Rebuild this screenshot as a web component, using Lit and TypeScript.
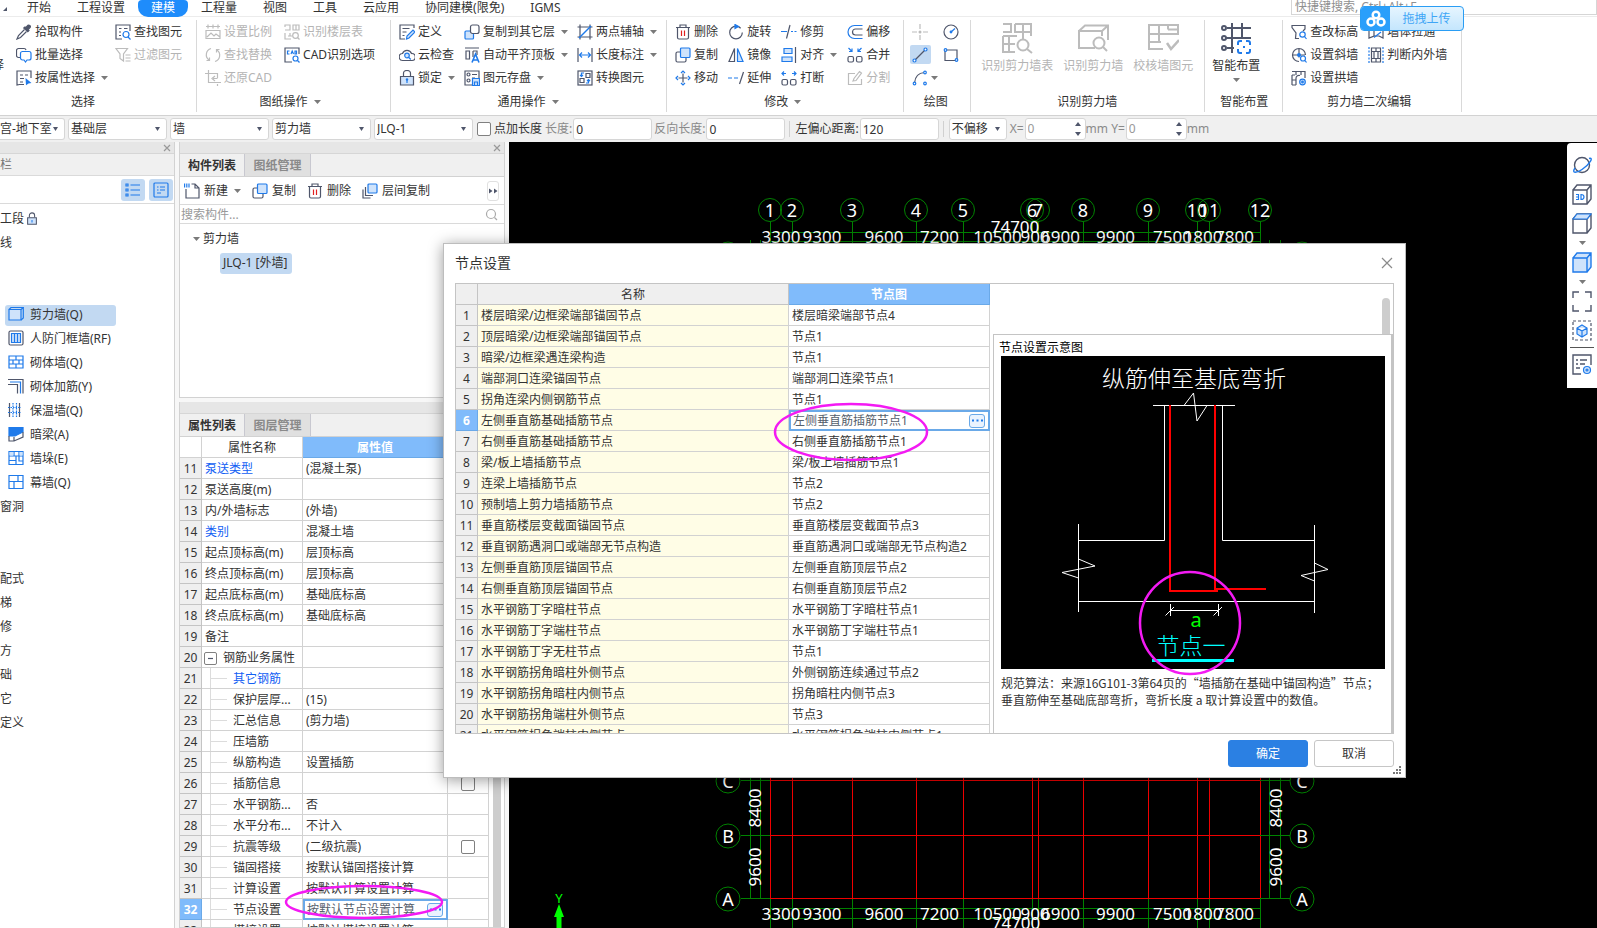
import { LitElement, html, svg, css, nothing } from "lit";
import { customElement } from "lit/decorators.js";
import { classMap } from "lit/directives/class-map.js";

const base = css`
  * { box-sizing: border-box; }
  button, input, select {
    font: inherit; color: inherit; margin: 0; padding: 0;
    border: 0; background: none; border-radius: 0; outline: none;
  }
  button { cursor: pointer; white-space: nowrap; }
  a { color: inherit; text-decoration: none; }
  svg { display: block; flex: none; fill: none; stroke-width: 1.2; }
  .ic { width: 16px; height: 16px; }
  .big { width: 32px; height: 32px; }
  .d { stroke: #4f566b; }
  .b { stroke: #1f7aea; }
  .g { stroke: #bcbcbc; }
  .r { stroke: #e02020; }
  .w { stroke: #fff; }
  .fl { fill: #cfe3fb; }
  .fb { fill: #1f7aea; }
  .fd { fill: #4f566b; }
  .fg { fill: #bcbcbc; }
  .fw { fill: #fff; }
  .ar { width: 7px; height: 4px; fill: #7a7a7a; }
`;

const arrow = html`<svg class="ar" viewBox="0 0 7 4"><path d="M0 0H7L3.5 4Z" /></svg>`;

const shapes: Record<string, unknown> = {
  pick: svg`<path class="d fd" d="M10 3.5l2-2.2c1-.9 3 .8 2.200 2l-2 2.200 .8 1-1.200 1.200L7.800 4l1.200-1z"/><path class="d" d="M8.500 5.500L2.500 11.500 1 15l3.500-1.500L10.500 7.500"/>`,
  batch: svg`<path class="d" d="M4 10.500H2.500a2 2 0 0 1-2-2V3.500a2 2 0 0 1 2-2H8a2 2 0 0 1 2 1.500"/><path class="b fw" d="M6 4.500h7a2 2 0 0 1 2 2V11a2 2 0 0 1-2 2h-2l-1.500 2L8 13H6.500a2 2 0 0 1-2-2V6.500a2 2 0 0 1 2-2z"/>`,
  attr: svg`<path class="d" d="M8 14.500H3.500L1 15V1H15V8M4 5h3M9 5h3M4 8.500h4M4 12h3"/><path class="fb" d="M9.500 8l6 5-3 .5-2.500 1.800z"/>`,
  find: svg`<path class="d" d="M7 15H1V1H15V7M4 4.500h2.500M4 8h2M4 11.500h2M9 4.500h3.500"/><circle class="b" cx="11" cy="10.500" r="3"/><path class="b" d="M13 13l2.500 2.500"/>`,
  filter: svg`<path class="g" d="M1 1.500H12.500L8.500 7V14L5 11.500V7ZM10.500 8h5M10.500 11h5M10.500 14h5"/>`,
  scale: svg`<path class="g" d="M1 2.500h14M3 .500v4M8 .500v4M13 .500v4M1 6.500h14v8H1zM2 13l4-4 3 3 2-2 4 3"/>`,
  floors: svg`<path class="g" d="M1 3V1h5v5H1M9 1h6v5H9zM12 1v5M1 9v6h6M4 12h4M6 9v3"/><circle class="g" cx="11.500" cy="11.500" r="2.800"/><path class="g" d="M13.500 13.500l2 2"/>`,
  replace: svg`<path class="g" d="M6 1.500A6.500 6.500 0 0 0 4 13M1.500 13.500h3V10.500M10 14.500A6.500 6.500 0 0 0 12 3M14.500 2.500h-3V5.500"/>`,
  cad: svg`<path class="d" d="M8 15H1V1H15V7"/><path class="b" d="M5.500 4H3.500v3h2M7 7l1.200-3L9.500 7M11 4v3h1.500V4z"/><circle class="b" cx="11.500" cy="11.500" r="2.500"/><path class="b" d="M13.500 13.500l2 2"/>`,
  restore: svg`<path class="g" d="M3.500 0V12.500H16M0 3.500H12.500V8M12.500 14V16M10 6l-3 2.500 3 2.500M12.500 8.500H8"/>`,
  define: svg`<path class="d" d="M6 15H1V1H15V4M3.500 4.500h7M3.500 8h4M3.500 11.500h2"/><path class="b fl" d="M7.500 15l.5-3L14 6l2 2-6 6z"/>`,
  cloud: svg`<path class="d" d="M4 13.500a3.500 3.500 0 0 1-.5-7A4.800 4.800 0 0 1 12.500 6.500a3.500 3.500 0 0 1 .5 7z"/><circle class="b fl" cx="8" cy="8.500" r="2.300"/><path class="b" d="M9.800 10.500l2 2"/>`,
  lock: svg`<path class="d fl" d="M1.500 6.500H14.500V15H1.500z"/><path class="d" d="M4.500 6V3.500a3.500 3 0 0 1 7 0V6"/><path class="b" d="M8 9.500V13"/><circle class="fb" cx="8" cy="9.500" r="1.200"/>`,
  copyto: svg`<rect class="b fl" x="1" y="7" width="8.500" height="8" rx="1"/><rect class="d fw" x="6.500" y="1" width="8.500" height="8.500" rx="2"/>`,
  align: svg`<path class="d" d="M1 1h14M2 4h3.500v8H2zM9 4h4v4M9 4v6"/><path class="b" stroke-width="1.600" d="M8 15.500L11.500 7l3.500 8.500M9 13h5"/>`,
  save: svg`<path class="d" d="M8 15H1V1H15V8M8 4.500h5M8 8h3"/><circle class="d" cx="4.500" cy="4.500" r="1.500"/><circle class="d" cx="4.500" cy="10.500" r="1.500"/><path class="b fl" d="M8.500 8.500H15.500V15.500H8.500zM10.500 15v-3h3v3"/>`,
  axis: svg`<path class="d" d="M3 .500V15.500M13 .500V15.500M.500 3H15.500M.500 13H15.500"/><path class="b" stroke-width="1.500" d="M2 14L14 2"/>`,
  dim: svg`<path class="d" d="M1 1V15M15 1V15"/><path class="b" d="M2.500 8H13.500M5 5.500L2.500 8 5 10.500M11 5.500L13.500 8 11 10.500"/>`,
  convert: svg`<rect class="d" x="1" y="1" width="14" height="14"/><path class="d" d="M9 3.500h4v4H9zM3 8.500h4v4H3z"/><path class="b" d="M7 3H4.500v3M3 5l1.500 1.500L6 5M9 13h2.500v-3M10 11l1.500-1.500L13 11"/>`,
  trash: svg`<path class="d" d="M1 3.500H15M5 3V1H11V3M2.500 4V13.500A1.500 1.500 0 0 0 4 15H12A1.500 1.500 0 0 0 13.500 13.500V4"/><path class="r" d="M6.500 6.500V12M9.500 6.500V12"/>`,
  copy: svg`<path class="d" d="M5 5H2.500A1.500 1.500 0 0 0 1 6.500V13.500A1.500 1.500 0 0 0 2.500 15H9.500A1.500 1.500 0 0 0 11 13.500V11"/><rect class="b fl" x="5.500" y="1" width="9.500" height="9.500" rx="1"/>`,
  move: svg`<path class="d" d="M8 3.500V12.500M3.500 8H12.500"/><path class="b" d="M6 3L8 1l2 2M6 13l2 2 2-2M3 6L1 8l2 2M13 6l2 2-2 2"/>`,
  rotate: svg`<circle class="d" cx="8" cy="8.500" r="6.300" stroke-dasharray="34 5"/><path class="b fb" d="M7 .500L10.500 2.500 7 4.500z"/>`,
  mirror: svg`<path class="d" d="M6.500 1.500V14.500H1z"/><path class="b fl" d="M9.500 1.500V14.500H15z"/>`,
  extend: svg`<path class="b" d="M0 8h4M6 8h4"/><path class="d" d="M15.500 2L11.500 14"/>`,
  trim: svg`<path class="b" d="M0 7.500H6M10 7.500h2M13.500 7.500h2"/><path class="d" d="M9 1L5.500 14.500"/>`,
  alignto: svg`<path class="b fl" d="M3 1.500H11V6.500H3zM1 10H11V14.500H1z"/><path class="d" d="M14.500 0V16"/>`,
  breakup: svg`<rect class="d" x="1" y="9.500" width="5.500" height="5.500" rx="1.500"/><rect class="d" x="9.500" y="9.500" width="5.500" height="5.500" rx="1.500"/><path class="b" d="M5 3.500H1.500M3 1.500l-2 2 2 2M11 3.500h3.500M13 1.500l2 2-2 2"/>`,
  offset: svg`<path class="b" d="M15.500 1.500H7.500a6.500 6.500 0 0 0 0 13H15.500"/><path class="d" d="M15.500 5H8.500a3 3 0 0 0 0 6H15.500"/>`,
  merge: svg`<rect class="d" x="1" y="9.500" width="5.500" height="5.500" rx="1.500"/><rect class="d" x="9.500" y="9.500" width="5.500" height="5.500" rx="1.500"/><path class="b" d="M1.500 1L5 4.500M5 1.500v3H2M14.500 1L11 4.500M11 1.500v3H14"/>`,
  split: svg`<path class="g" d="M8 3.500H1.500V14.500H14.500V9M6 11l3-.5L14.500 3 12.500 1.500 7 8.500z"/>`,
  point: svg`<path class="g" d="M8 0v5M8 11v5M0 8h5M11 8h5"/><circle class="fg" cx="8" cy="8" r="1.500"/>`,
  circle: svg`<circle class="d" cx="8" cy="8" r="7"/><path class="b" d="M8 8L12 4.500"/><circle class="fb" cx="8" cy="8" r="1.400"/>`,
  line: svg`<path class="d" d="M3 13L13 3"/><circle class="b fw" cx="2.500" cy="13.500" r="1.500"/><circle class="b fw" cx="13.500" cy="2.500" r="1.500"/>`,
  rect: svg`<path class="d" d="M2 3H14V13.500H2z"/><circle class="b fw" cx="2.500" cy="3" r="1.300"/><circle class="b fw" cx="13.500" cy="13" r="1.300"/>`,
  arc: svg`<path class="d" d="M2.500 13C3 7 6 3 12.500 2.500"/><circle class="b fw" cx="2.500" cy="13.500" r="1.300"/><circle class="b fw" cx="13" cy="2.500" r="1.300"/><circle class="b fw" cx="13" cy="13.500" r="1.300"/>`,
  level: svg`<path class="d" d="M8 14.500H4.500L5 9 1 3.500V1.500H14V5l-2 2"/><circle class="b" cx="11.500" cy="10.500" r="2.700"/><path class="b" d="M13.500 12.500l2 2.500"/>`,
  slope: svg`<path class="d" d="M8 14.500a6.500 6.500 0 1 1 6.500-6.500M8 1.500v9M1.500 8H14"/><circle class="fb" cx="8" cy="8" r="2"/><circle class="b" cx="12" cy="11.500" r="2.500"/><path class="b" d="M14 13.500l1.500 2"/>`,
  arch: svg`<path class="d" d="M1 15V5M1 1.500H14V8M1 5H4M1 10H5M5 15V8a3 3 0 0 1 4-2.500M5 2v3M10 2v3M5 15H1"/><circle class="b fl" cx="11.500" cy="12" r="2.800"/><circle class="b" cx="11.500" cy="12" r=".8"/>`,
  through: svg`<path class="d" d="M1 4L6 2V12L1 14zM6 12h5l4 2V4L11 2"/><path class="b" d="M6 13.500L13 8"/>`,
  inout: svg`<path class="b" stroke-dasharray="2 1.500" d="M1 0V16M15 0V16"/><path class="d" d="M3.500 1H12.500V15H3.500zM6 4.500h4v7H6zM3.500 4.500h9M3.500 11.500h9M8 1v3.500M8 11.500V15"/>`,
  newdoc: svg`<path class="b" stroke-width="2" stroke-dasharray="1.200 1" d="M0 1.500H6M0 3.500H6"/><path class="d" d="M2 6V15H15V5L11 1H7.500M11 1V5H15"/>`,
  layercopy: svg`<path class="d" d="M1 6.500V15H8.500M3.500 4V12.500H11"/><rect class="b fl" x="6" y="1" width="9" height="9" rx="1"/>`,
  list: svg`<path class="b" d="M5.500 3H15M5.500 8H15M5.500 13H15"/><path class="b" d="M1 2h2v2H1zM1 7h2v2H1zM1 12h2v2H1z"/>`,
  detail: svg`<rect class="b" x="1" y="1" width="14" height="14" rx="1"/><path class="b" d="M4 5h1.500M7 5h5M4 8h1.500M7 8h5M4 11h4"/>`,
  wall: svg`<path class="b fl" d="M1 3.500H13V14H1z"/><path class="b" d="M1 3.500L3 1.500H15.300L13 3.500M13 14L15.300 12V1.500"/>`,
  rf: svg`<rect class="d" x="1" y="1" width="14" height="14" rx="1.500"/><path class="b fl" d="M3.500 3.500H12.500V12.500H3.500zM6.500 3.500v9M9.500 3.500v9"/>`,
  brick: svg`<path class="b" d="M1 2H15V14H1zM1 6H15M1 10H15M8 2v4M5 6v4M11 6v4M8 10v4"/>`,
  rebar: svg`<path class="d" d="M0 1.500H15V15.500M0 6.500H9.500V15.500"/><path class="b" d="M2 4h10.500V15.500"/>`,
  insul: svg`<path class="d" d="M1.500 1V15M11.500 1V15"/><path class="b" stroke-dasharray="1.500 1" d="M5 1V15M8.500 1V15M0 5.500H13M0 10.500H13"/>`,
  beam: svg`<path class="b fb" d="M1 1.500H15V6L7 10H1z"/><path class="d" d="M1 10V15H6L15 11V6M6 15v-4"/>`,
  pier: svg`<path class="b" d="M1 1.500H15V14.500H1zM1 6H15M6 1.500V6M11 1.500V6M8 6V14.500M1 10.500H8M11 6v5h4"/><path class="fl" d="M1.600 2.100H5.400V5.400H1.600zM11.600 2.100h3v3.300h-3z"/>`,
  curtain: svg`<path class="b" d="M1 1.500H15V14.500H1zM1 7.500H15M10 1.500V7.500M6 7.500V14.500"/>`,
  locks: svg`<path class="d fl" d="M3 6.500H13V14H3z"/><path class="d" d="M5 6V4a3 3 0 0 1 6 0V6"/><path class="b" d="M8 9v3"/>`,
  mag: svg`<circle cx="7" cy="7" r="4.500" stroke="#aaa"/><path stroke="#aaa" d="M10.500 10.500L13 13"/>`,
  more: svg`<path class="fd" d="M4 5.500L7.500 8 4 10.500zM9 5.500L12.500 8 9 10.500z"/>`,
};
const ic = (name: string) => html`<svg class="ic" viewBox="0 0 16 16" aria-hidden="true">${shapes[name]}</svg>`;

const bigs: Record<string, unknown> = {
  table: svg`<path class="g" stroke-width="2" d="M2 2H10V10H2M14 2H30V14M14 2V10H30M22 2V18M2 14V30H14M2 22H14M8 14V30M2 14H16"/><circle class="g" stroke-width="2" cx="22" cy="23" r="5.500"/><path class="g" stroke-width="2" d="M26 27l5 4"/>`,
  box: svg`<path class="g" stroke-width="2" d="M18 26H2V9H25V14M2 9L8 3.500H31V18M25 9L31 3.500"/><circle class="g" stroke-width="2" cx="22" cy="21" r="5.500"/><path class="g" stroke-width="2" d="M26 25l4 4"/>`,
  check: svg`<path class="g" stroke-width="2" d="M16 27H2V3H31V12H2M12 3V12M21 7.500H31M2 20H14M12 12V20M21 3V7.500"/><path class="g" stroke-width="2.500" d="M20 21l4 6 8-9"/>`,
  smart: svg`<path class="d" stroke-width="2" d="M7 6H31M7 16H17M7 26H14M12 1V31M22 1V16M6 16H31"/><circle class="d fw" stroke-width="2" cx="4" cy="6" r="2"/><circle class="d fw" stroke-width="2" cx="4" cy="16" r="2"/><circle class="d fw" stroke-width="2" cx="4" cy="26" r="2"/><path class="fw" d="M16 18H32V32H16z"/><path class="b" stroke-width="2" d="M18 23V21a2 2 0 0 1 2-2H22M26 19H28a2 2 0 0 1 2 2V23M30 27V29a2 2 0 0 1-2 2H26M22 31H20a2 2 0 0 1-2-2V27M23 25H25"/>`,
};
const big = (name: string) => html`<svg class="big" viewBox="0 0 32 32" aria-hidden="true">${bigs[name]}</svg>`;

/* Axis grid drawn on the drawing area, in window coordinates. */
const AXES = [770, 792, 852, 916, 963, 1032, 1038, 1083, 1148, 1197, 1209, 1260];
const SPANS = ["3300", "9300", "9600", "7200", "10500", "900", "6900", "9900", "7500", "1800", "7800"];
const ROWS: [string, number][] = [["D", 253], ["C", 780], ["B", 835], ["A", 898]];

@customElement("plan-canvas")
class PlanCanvas extends LitElement {
  static styles = [base, css`
    :host { display: block; background: #000; overflow: hidden; }
    svg { width: 100%; height: 100%; }
    text { fill: #fff; font: 17px "Noto Sans", sans-serif; text-anchor: middle; }
    .n { font-size: 18px; }
    .y { fill: #0f0; font-size: 13px; }
    .grn { stroke: #008200; stroke-width: 1; }
    .red { stroke: #f00000; stroke-width: 1; }
  `];
  render() {
    return html`<svg aria-label="轴网"><g transform="translate(-509 -142)">
      ${AXES.map((x, i) => svg`
        <path class="grn" d="M${x + 0.5} 222V780M${x + 0.5} 898V928" />
        <path class="red" d="M${x + 0.5} 700V898" />
        <circle class="grn" cx=${x} cy="210" r="11.500" />
        <text class="n" x=${x} y="217">${i + 1}</text>`)}
      <path class="grn" d="M770 232.500H1260M770 241.500H1260M770 908.500H1260M770 918.500H1260M750.500 240V898M760.500 240V898M1269.500 240V898M1280.500 240V898" />
      ${ROWS.map(([name, y]) => svg`
        <path class="grn" d="M741 ${y + 0.5}H770M1260 ${y + 0.5}H1290" />
        <path class="red" d="M770 ${y + 0.5}H1260" />
        ${[728, 1302].map((x) => svg`<circle class="grn" cx=${x} cy=${y + 1} r="12" />
          <text class="n" x=${x} y=${y + 8}>${name}</text>`)}`)}
      ${SPANS.map((s, i) => [243, 920].map((y) => svg`
        <text x=${(AXES[i] + AXES[i + 1]) / 2} y=${y}>${s}</text>`))}
      <text x="1015" y="233">74700</text>
      <text x="1016" y="929">74700</text>
      ${[755, 1276].map((x) => [["8400", 808], ["9600", 867]].map(([s, y]) => svg`
        <text transform="translate(${x + 6} ${y}) rotate(-90)">${s}</text>`))}
      <text class="y" x="559" y="903">Y</text>
      <path fill="#0f0" d="M559 904L564 917H561.500V928H556.500V917H554Z" />
    </g></svg>`;
  }
}

const NODES: [string, string][] = [
  ["楼层暗梁/边框梁端部锚固节点", "楼层暗梁端部节点4"],
  ["顶层暗梁/边框梁端部锚固节点", "节点1"],
  ["暗梁/边框梁遇连梁构造", "节点1"],
  ["端部洞口连梁锚固节点", "端部洞口连梁节点1"],
  ["拐角连梁内侧钢筋节点", "节点1"],
  ["左侧垂直筋基础插筋节点", "左侧垂直筋插筋节点1"],
  ["右侧垂直筋基础插筋节点", "右侧垂直筋插筋节点1"],
  ["梁/板上墙插筋节点", "梁/板上墙插筋节点1"],
  ["连梁上墙插筋节点", "节点2"],
  ["预制墙上剪力墙插筋节点", "节点2"],
  ["垂直筋楼层变截面锚固节点", "垂直筋楼层变截面节点3"],
  ["垂直钢筋遇洞口或端部无节点构造", "垂直筋遇洞口或端部无节点构造2"],
  ["左侧垂直筋顶层锚固节点", "左侧垂直筋顶层节点2"],
  ["右侧垂直筋顶层锚固节点", "右侧垂直筋顶层节点2"],
  ["水平钢筋丁字暗柱节点", "水平钢筋丁字暗柱节点1"],
  ["水平钢筋丁字端柱节点", "水平钢筋丁字端柱节点1"],
  ["水平钢筋丁字无柱节点", "节点1"],
  ["水平钢筋拐角暗柱外侧节点", "外侧钢筋连续通过节点2"],
  ["水平钢筋拐角暗柱内侧节点", "拐角暗柱内侧节点3"],
  ["水平钢筋拐角端柱外侧节点", "节点3"],
  ["水平钢筋拐角端柱内侧节点", "水平钢筋拐角端柱内侧节点1"],
];

const editor = (value: string, label: string) => html`<div class="edit">
  <input .value=${value} aria-label=${label} />
  <button class="dots" aria-label="选择节点"><svg width="11" height="3" viewBox="0 0 11 3"><path class="fb" d="M0 .500h2v2H0zM4.500 .500h2v2h-2zM9 .500h2v2H9z" /></svg></button>
</div>`;

const tableStyles = css`
  table { border-collapse: separate; border-spacing: 0; table-layout: fixed; }
  th, td {
    height: 21px; padding: 2px 0 0 3px; text-align: left; font-weight: 400; line-height: 18px;
    border-right: 1px solid #d2d2d2; border-bottom: 1px solid #d2d2d2;
    white-space: nowrap; overflow: hidden;
  }
  thead th { text-align: center; padding: 2px 0 0; }
  tbody th { background: #efefef; text-align: center; padding: 2px 0 0; border-color: #c4c4c4; }
  thead th.hot, tbody th.hot { background: #80bbfb; color: #fff; font-weight: 700; border-color: #6aa9e8; }
  td.cell { padding: 0; border: 0; }
  .edit { height: 21px; border: 2px solid #6aa9e8; background: #fff; display: flex; align-items: center; padding: 0 3px 0 2px; }
  .edit input { flex: 1; min-width: 0; color: #56606c; height: 17px; padding-top: 1px; }
  .dots { width: 16px; height: 14px; border: 1px solid #6aa9e8; border-radius: 3px; background: #eaf3fe; display: grid; place-items: center; }
`;

@customElement("node-dialog")
class NodeDialog extends LitElement {
  static styles = [base, tableStyles, css`
    :host {
      display: flex; flex-direction: column; padding: 0 11px; background: #fff;
      border: 1px solid #bdbdbd; box-shadow: 0 2px 14px rgba(0, 0, 0, 0.4); color: #333;
    }
    header { height: 39px; flex: none; display: flex; align-items: center; justify-content: space-between; font-size: 14px; padding: 0 1px 2px 0; }
    .frame { flex: 1; min-height: 0; display: flex; border: 1px solid #c4c4c4; overflow: hidden; }
    .nodes { width: 534px; flex: none; }
    .nodes thead th { height: 20px; background: #efefef; border-color: #c4c4c4; }
    .nodes thead th.hot { background: #80bbfb; border-color: #6aa9e8; }
    td.name { background: #fffde6; }
    .side { flex: 1; min-width: 0; margin-left: 3px; display: flex; flex-direction: column; }
    .scroll { height: 50px; flex: none; display: flex; justify-content: flex-end; padding: 14px 3px 0 0; }
    .thumb { width: 8px; background: #cdcdcd; border-radius: 4px 4px 0 0; }
    .view { flex: 1; border: 1px solid #c4c4c4; border-width: 1px 2px 0 1px; padding: 0 6px 0 7px; margin: 0; color: #222; }
    .view h3 { margin: 0 -2px; font-size: 12px; font-weight: 400; line-height: 21px; height: 21px; padding-top: 2px; color: #000; }
    .view svg { width: 100%; height: 313px; background: #000; }
    .view p { margin: 5px -4px 0 0; line-height: 17px; white-space: nowrap; font-family: "Noto Sans CJK SC", sans-serif; color: #333; }
    .cap { fill: #fff; font: 300 23px "Noto Sans CJK SC", sans-serif; text-anchor: middle; }
    .cy { fill: #0ff; }
    .a { fill: #0f0; font: 20px "Noto Sans", sans-serif; text-anchor: middle; }
    footer { height: 43px; flex: none; display: flex; justify-content: flex-end; gap: 6px; padding-top: 6px; position: relative; }
    footer button { width: 80px; height: 27px; border: 1px solid #c6c6c6; border-radius: 3px; background: #fff; line-height: 25px; }
    footer .ok { background: #2b80e3; border-color: #2b80e3; color: #fff; }
    .grip { position: absolute; right: -8px; bottom: 2px; }
  `];
  render() {
    return html`
      <header><span>节点设置</span>
        <button aria-label="关闭"><svg width="12" height="12" viewBox="0 0 12 12"><path stroke="#8a8a8a" d="M1 1L11 11M11 1L1 11" /></svg></button>
      </header>
      <div class="frame">
        <table class="nodes">
          <colgroup><col style="width:22px" /><col style="width:311px" /><col style="width:201px" /></colgroup>
          <thead><tr><th></th><th>名称</th><th class="hot">节点图</th></tr></thead>
          <tbody>${NODES.map(([name, node], i) => html`<tr>
            <th class=${classMap({ hot: i === 5 })}>${i + 1}</th>
            <td class="name">${name}</td>
            ${i === 5 ? html`<td class="cell">${editor(node, name)}</td>` : html`<td>${node}</td>`}
          </tr>`)}</tbody>
        </table>
        <div class="side">
          <div class="scroll"><div class="thumb"></div></div>
          <section class="view">
            <h3>节点设置示意图</h3>
            <svg viewBox="0 0 384 313">
              <text class="cap" x="193" y="31">纵筋伸至基底弯折</text>
              <path stroke="#fff" stroke-width="1" d="M152 49.500H234M183 49.500L192.500 37 196 65 206 49.500M163.500 49V184.500H77.500M221.500 49V184.500H313.500M77.500 168V256M313.500 169V257M77.500 245.500H313.500M77.500 203L94 210 61 216.500 77.500 222M313.500 207L327 213.500 300 219.500 313.500 225M169 254.500H217M169.500 248V260M217.500 248V260M164.500 259.500L173 251M212.500 259.500L221 251" />
              <path stroke="#f00" stroke-width="2" d="M169 49V235H217M214 49V233H265" />
              <text class="a" x="195" y="271">a</text>
              <text class="cap cy" x="190" y="298">节点一</text>
              <path stroke="#0ff" stroke-width="3" d="M151 304.500H233" />
            </svg>
            <p>规范算法：来源16G101-3第64页的“墙插筋在基础中锚固构造”节点；<br />垂直筋伸至基础底部弯折，弯折长度 a 取计算设置中的数值。</p>
          </section>
        </div>
      </div>
      <footer><button class="ok">确定</button><button>取消</button>
        <svg class="grip" width="9" height="9" viewBox="0 0 9 9"><path fill="#777" d="M6 0h2v2H6zM6 3h2v2H6zM6 6h2v2H6zM3 3h2v2H3zM3 6h2v2H3zM0 6h2v2H0z" /></svg>
      </footer>`;
  }
}

type Tool = [string, string, string?];
/* Third entry: "v" adds a drop-down arrow, "x" greys the tool out. */
const tool = ([icon, label, flag]: Tool) => html`<button class=${classMap({ tool: true, off: flag === "x" })}>
  ${ic(icon)}<span>${label}</span>${flag === "v" ? arrow : nothing}</button>`;
const toolCol = (tools: Tool[]) => html`<div class="col">${tools.map(tool)}</div>`;
const bigTool = (icon: string, label: string, flag = "") => html`<button class=${classMap({ bigtool: true, off: flag === "x" })}>
  ${big(icon)}<span>${label}</span>${flag === "v" ? arrow : nothing}</button>`;

const combo = (cls: string, value: string, label: string) => html`<div class="combo ${cls}">
  <select aria-label=${label}><option>${value}</option></select>
  <svg class="ar" viewBox="0 0 7 4"><path class="fd" d="M1 0H6L3.500 4Z" /></svg></div>`;
const spin = (id: string) => html`<div class="spin"><input id=${id} type="number" value="0" />
  <svg width="6" height="14" viewBox="0 0 6 14"><path class="fd" d="M0 4H6L3 0ZM0 10H6L3 14Z" /></svg></div>`;

const CATALOG: [string, string][] = [
  ["", "工段"], ["", "线"], ["", ""], ["", ""],
  ["wall", "剪力墙(Q)"], ["rf", "人防门框墙(RF)"], ["brick", "砌体墙(Q)"], ["rebar", "砌体加筋(Y)"],
  ["insul", "保温墙(Q)"], ["beam", "暗梁(A)"], ["pier", "墙垛(E)"], ["curtain", "幕墙(Q)"],
  ["", "窗洞"], ["", ""], ["", ""], ["", "配式"], ["", "梯"], ["", "修"], ["", "方"], ["", "础"], ["", "它"], ["", "定义"],
];

/* name, value, flags: l = link colour, c = tick box in the last column */
const PROPS: [string, string, string?][] = [
  ["泵送类型", "(混凝土泵)", "l"], ["泵送高度(m)", ""], ["内/外墙标志", "(外墙)"], ["类别", "混凝土墙", "l"],
  ["起点顶标高(m)", "层顶标高"], ["终点顶标高(m)", "层顶标高"], ["起点底标高(m)", "基础底标高"],
  ["终点底标高(m)", "基础底标高"], ["备注", ""], ["钢筋业务属性", ""], ["其它钢筋", "", "l"],
  ["保护层厚...", "(15)"], ["汇总信息", "(剪力墙)"], ["压墙筋", ""], ["纵筋构造", "设置插筋"],
  ["插筋信息", "", "c"], ["水平钢筋...", "否"], ["水平分布...", "不计入"], ["抗震等级", "(二级抗震)", "c"],
  ["锚固搭接", "按默认锚固搭接计算"], ["计算设置", "按默认计算设置计算"], ["节点设置", "按默认节点设置计算"],
  ["搭接设置", "按默认搭接设置计算"],
];

const cube = (cls: string) => svg`<path class=${cls} stroke-width="1.400" d="M1 6H15V20H1zM1 6L5 1H19V15L15 20M15 6L19 1"/>`;
const viewIcon = (body: unknown) => html`<svg width="20" height="21" viewBox="0 0 20 21">${body}</svg>`;

@customElement("app-root")
class AppRoot extends LitElement {
  static styles = [base, tableStyles, css`
    :host {
      display: flex; flex-direction: column; height: 100vh; overflow: hidden; position: relative;
      background: #f0f0f0; color: #333;
      font: 12px/16px "Noto Sans", "Noto Sans CJK SC", sans-serif;
    }
    .tabs { height: 17px; flex: none; display: flex; background: #fff; border-bottom: 1px solid #ececec; padding-left: 3px; }
    .tabs .corner { width: 11px; height: 11px; flex: none; }
    .tabs a { padding: 0 13px; height: 16px; line-height: 15px; }
    .tabs a.on { background: #1e8cfb; color: #fff; height: 17px; border-radius: 4px 4px 10px 10px; }
    .tabs input { margin-left: auto; width: 306px; height: 15px; border: 1px solid #d6d6d6; border-top: 0; padding-left: 3px; }
    .tabs input::placeholder { color: #909090; opacity: 1; }
    .ribbon { height: 99px; flex: none; display: flex; background: #fff; border-bottom: 1px solid #d2d2d2; padding: 3px 0; }
    .group { flex: none; display: flex; flex-direction: column; border-right: 1px solid #d9d9d9; height: 92px; padding: 0 14px 0 8px; }
    .cols { display: flex; gap: 10px; height: 69px; flex: none; }
    .col { display: flex; flex-direction: column; }
    .tool { display: flex; align-items: center; gap: 3px; height: 23px; }
    .tool .ar { margin-left: 3px; }
    .off { color: #b4b4b4; }
    .label { display: flex; align-items: center; justify-content: center; gap: 6px; height: 26px; flex: none; }
    .g1 { padding-left: 0; } .g1 .cols { gap: 7px; } .g1 .label { padding-right: 16px; }
    .cut { width: 9px; display: flex; justify-content: flex-start; align-items: flex-end; padding-bottom: 16px; }
    .cut span { width: 4px; overflow: hidden; display: flex; justify-content: flex-end; }
    .g2 { padding-right: 15px; } .g2 .cols { gap: 12px; }
    .g3 { padding-right: 9px; } .g3 .cols { gap: 9px; }
    .g4 { padding-right: 13px; }
    .g5 { padding: 0 9px 0 6px; } .g5 .cols { gap: 1px; }
    .g5 .tool { padding: 0 2px 0 2px; gap: 0; }
    .g5 .on { background: #c2d9f2; height: 19px; width: 21px; margin: 2px 0; border-radius: 2px; }
    .g6 { padding: 0 11px 0 10px; }
    .g7 { padding: 0 22px 0 7px; } .g7 .label { margin-right: -16px; }
    .bigtool { display: flex; flex-direction: column; align-items: center; gap: 4px; padding-top: 2px; height: 66px; }
    .options { height: 26px; flex: none; display: flex; align-items: center; overflow: hidden; }
    .combo, .spin, .options .box { height: 22px; background: #fff; border: 1px solid #d6d6d6; border-radius: 3px; display: flex; align-items: center; flex: none; }
    .combo { width: 99px; margin-right: 3px; padding-right: 5px; }
    .combo select { appearance: none; flex: 1; min-width: 0; padding-left: 2px; }
    .combo.first { width: 65px; border-left: 0; border-radius: 0 3px 3px 0; }
    .combo.first select { padding: 0; }
    .combo.off { width: 58px; color: #333; }
    .options .box { width: 79px; padding-left: 2px; margin-right: 2px; }
    .options label { margin-right: 1px; }
    .options .mute { color: #8a8a8a; }
    .tick { appearance: none; width: 14px; height: 14px; border: 1px solid #808080; border-radius: 2px; background: #fff; flex: none; display: block; }
    .options .tick { margin: 0 3px 0 1px; }
    .options .tick + label { margin-right: 3px; }
    .sep { width: 1px; height: 16px; background: #d0d0d0; margin: 0 5px 0 2px; }
    .spin { width: 61px; color: #999; padding: 0 4px 0 2px; }
    .spin input { appearance: textfield; flex: 1; min-width: 0; }
    .spin input::-webkit-inner-spin-button { display: none; }
    main { flex: 1; min-height: 0; display: flex; gap: 4px; background: #f7f7f7; }
    .left { width: 175px; flex: none; background: #fff; border-right: 1px solid #d2d2d2; }
    .strip { height: 12px; background: #e6e6e6; border-bottom: 1px solid #d6d6d6; display: flex; align-items: center; justify-content: flex-end; padding-right: 3px; flex: none; }
    .head { height: 22px; background: #f0f0f0; border-bottom: 1px solid #dadada; line-height: 22px; color: #777; }
    .modes { height: 28px; border-bottom: 1px solid #dadada; display: flex; gap: 4px; justify-content: flex-end; align-items: center; padding: 0 1px 0 0; }
    .modes button { width: 24px; height: 22px; background: #c2d9f2; border-radius: 3px; display: grid; place-items: center; }
    .catalog { padding: 3px 0 0; margin: 0; list-style: none; }
    .catalog li { height: 24px; display: flex; align-items: center; }
    .catalog a { display: flex; align-items: center; height: 21px; gap: 1px; }
    .catalog a span + .ic { width: 14px; height: 14px; }
    .catalog .leaf { width: 111px; margin-left: 5px; padding-left: 3px; gap: 6px; white-space: nowrap; }
    .catalog .leaf .ic { margin-top: -2px; }
    .catalog .on { background: #c2d9f2; border-radius: 3px; }
    .mid { width: 326px; flex: none; display: flex; flex-direction: column; gap: 4px; }
    .pane { background: #fff; border: 1px solid #d2d2d2; border-top: 0; display: flex; flex-direction: column; }
    .parts { height: 256px; flex: none; }
    .propsp { flex: 1; min-height: 0; overflow: hidden; }
    .ptabs { display: flex; height: 23px; flex: none; background: #f0f0f0; border-bottom: 1px solid #d2d2d2; }
    .ptabs button { width: 65px; padding-top: 2px; font-weight: 700; border-right: 1px solid #c8c8d0; }
    .ptabs button + button { background: #e0e0e0; color: #8a8a8a; width: 66px; }
    .bar { display: flex; align-items: center; height: 28px; flex: none; border-bottom: 1px solid #dadada; padding: 1px 5px 0 4px; gap: 11px; }
    .bar .tool { gap: 4px; }
    .bar .tool .ar { margin-left: 2px; }
    .bar .more { margin-left: auto; width: 12px; height: 20px; border: 1px solid #e0e0e0; border-radius: 3px; display: grid; place-items: center; }
    .find { display: flex; align-items: center; height: 19px; flex: none; border-bottom: 1px solid #dadada; padding: 1px 4px 0 1px; }
    .find input { flex: 1; height: 17px; }
    .find input::placeholder { color: #999; opacity: 1; }
    .tree { padding: 3px 0 0 13px; }
    .tree div { height: 24px; display: flex; align-items: center; gap: 3px; }
    .tree .sel { background: #c2d9f2; border-radius: 3px; height: 21px; padding: 0 5px 0 3px; margin-left: 27px; line-height: 20px; }
    .pbody { display: flex; flex: 1; min-height: 0; overflow: hidden; justify-content: space-between; }
    .props { width: 309px; flex: none; align-self: flex-start; }
    .bartrack { width: 8px; background: #cdcdcd; margin-right: 3px; }
    .props .lnk { color: #1260f4; }
    .props td.nest { padding: 0; }
    .nest div { display: flex; align-items: center; height: 20px; margin-left: 8px; border-left: 1px solid #dcdcdc; gap: 6px; }
    .nest div span { padding-top: 2px; }
    .nest div::before { content: ""; width: 16px; height: 1px; background: #dcdcdc; }
    .fold { display: flex; align-items: center; gap: 6px; margin-left: -1px; }
    .fold button { width: 13px; height: 13px; border: 1px solid #808080; border-radius: 2px; display: grid; place-items: center; }
    .props .tick { margin-left: 10px; }
    plan-canvas { flex: 1; min-width: 0; }
    .views { position: absolute; top: 143px; right: 0; width: 30px; height: 245px; background: #fff; border-radius: 4px 0 0 0; display: flex; flex-direction: column; align-items: center; padding: 12px 0 0; gap: 8px; }
    .views hr { width: 24px; margin: -2px 0; border: 0; border-top: 1px solid #555; }
    .views .ar { margin: -1px 0 -1px; }
    node-dialog { position: absolute; left: 443px; top: 243px; width: 963px; height: 535px; }
    .upload { position: absolute; left: 1360px; top: 6px; width: 104px; height: 25px; display: flex; border: 1px solid #2a9df4; border-radius: 4px; overflow: hidden; background: linear-gradient(#e6f5ff, #c4e6fd); color: #3ea6f6; }
    .upload i { width: 29px; height: 23px; background: #2a9ffb; display: grid; place-items: center; }
    .upload span { flex: 1; text-align: center; line-height: 24px; }
    .marks { position: absolute; inset: 0; width: 100%; height: 100%; pointer-events: none; }
    .marks ellipse { stroke: #f31af3; stroke-width: 2.5; }
  `];

  private closeX = html`<svg width="8" height="8" viewBox="0 0 8 8"><path stroke="#999" d="M1 1L7 7M7 1L1 7" /></svg>`;

  private ribbon() {
    return html`<div class="ribbon">
      <section class="group g1"><div class="cols">
        <div class="cut"><span>择</span></div>
        ${toolCol([["pick", "拾取构件"], ["batch", "批量选择"], ["attr", "按属性选择", "v"]])}
        ${toolCol([["find", "查找图元"], ["filter", "过滤图元", "x"]])}
      </div><div class="label">选择</div></section>
      <section class="group g2"><div class="cols">
        ${toolCol([["scale", "设置比例", "x"], ["replace", "查找替换", "x"], ["restore", "还原CAD", "x"]])}
        ${toolCol([["floors", "识别楼层表", "x"], ["cad", "CAD识别选项"]])}
      </div><div class="label">图纸操作 ${arrow}</div></section>
      <section class="group g3"><div class="cols">
        ${toolCol([["define", "定义"], ["cloud", "云检查"], ["lock", "锁定", "v"]])}
        ${toolCol([["copyto", "复制到其它层", "v"], ["align", "自动平齐顶板", "v"], ["save", "图元存盘", "v"]])}
        ${toolCol([["axis", "两点辅轴", "v"], ["dim", "长度标注", "v"], ["convert", "转换图元"]])}
      </div><div class="label">通用操作 ${arrow}</div></section>
      <section class="group g4"><div class="cols">
        ${toolCol([["trash", "删除"], ["copy", "复制"], ["move", "移动"]])}
        ${toolCol([["rotate", "旋转"], ["mirror", "镜像"], ["extend", "延伸"]])}
        ${toolCol([["trim", "修剪"], ["alignto", "对齐", "v"], ["breakup", "打断"]])}
        ${toolCol([["offset", "偏移"], ["merge", "合并"], ["split", "分割", "x"]])}
      </div><div class="label">修改 ${arrow}</div></section>
      <section class="group g5"><div class="cols">
        <div class="col">
          <button class="tool" aria-label="点">${ic("point")}</button>
          <button class="tool on" aria-label="直线">${ic("line")}</button>
          <button class="tool" aria-label="弧">${ic("arc")}${arrow}</button>
        </div>
        <div class="col">
          <button class="tool" aria-label="圆">${ic("circle")}</button>
          <button class="tool" aria-label="矩形">${ic("rect")}</button>
        </div>
      </div><div class="label">绘图</div></section>
      <section class="group g6"><div class="cols">
        ${bigTool("table", "识别剪力墙表", "x")}${bigTool("box", "识别剪力墙", "x")}${bigTool("check", "校核墙图元", "x")}
      </div><div class="label">识别剪力墙</div></section>
      <section class="group g7"><div class="cols">${bigTool("smart", "智能布置", "v")}</div><div class="label">智能布置</div></section>
      <section class="group g8"><div class="cols">
        ${toolCol([["level", "查改标高"], ["slope", "设置斜墙"], ["arch", "设置拱墙"]])}
        ${toolCol([["through", "墙体拉通"], ["inout", "判断内外墙"]])}
      </div><div class="label">剪力墙二次编辑</div></section>
    </div>`;
  }

  private options() {
    return html`<div class="options">
      ${combo("first", "宫-地下室", "工程")}${combo("", "基础层", "楼层")}${combo("", "墙", "构件类别")}
      ${combo("", "剪力墙", "构件类型")}${combo("", "JLQ-1", "构件")}
      <input class="tick" type="checkbox" id="addlen" /><label for="addlen">点加长度</label>
      <label class="mute" for="len">长度:</label><input class="box" id="len" value="0" />
      <label class="mute" for="rlen">反向长度:</label><input class="box" id="rlen" value="0" />
      <span class="sep"></span>
      <label for="ecc">左偏心距离:</label><input class="box" id="ecc" value="120" />
      <span class="sep"></span>
      ${combo("off", "不偏移", "偏移方式")}
      <label class="mute" for="ox">X=</label>${spin("ox")}<label class="mute" for="oy">mm Y=</label>${spin("oy")}<span class="mute">mm</span>
    </div>`;
  }

  private left() {
    return html`<aside class="left">
      <div class="strip">${this.closeX}</div>
      <div class="head">栏</div>
      <div class="modes"><button aria-label="列表">${ic("list")}</button><button aria-label="详情">${ic("detail")}</button></div>
      <ul class="catalog">${CATALOG.map(([icon, name], i) => html`<li>
        ${name ? html`<a href="#" class=${classMap({ leaf: !!icon, on: i === 4 })}>${icon ? ic(icon) : nothing}<span>${name}</span>${i === 0 ? ic("locks") : nothing}</a>` : nothing}
      </li>`)}</ul>
    </aside>`;
  }

  private propRow([name, value, flag]: [string, string, string?], i: number) {
    const n = i + 11;
    const label = html`<span class=${classMap({ lnk: flag === "l" })}>${name}</span>`;
    return html`<tr>
      <th class=${classMap({ hot: n === 32 })}>${n}</th>
      ${n > 20 ? html`<td class="nest"><div>${label}</div></td>`
        : n === 20 ? html`<td><div class="fold"><button aria-label="折叠"><svg width="7" height="7" viewBox="0 0 7 7"><path class="d" d="M1 3.500H6" /></svg></button>${label}</div></td>`
        : html`<td>${label}</td>`}
      ${n === 32 ? html`<td class="cell">${editor(value, name)}</td>` : html`<td>${value}</td>`}
      <td>${flag === "c" ? html`<input class="tick" type="checkbox" aria-label=${name} />` : nothing}</td>
    </tr>`;
  }

  private mid() {
    return html`<div class="mid">
      <section class="pane parts">
        <div class="strip">${this.closeX}</div>
        <div class="ptabs"><button>构件列表</button><button>图纸管理</button></div>
        <div class="bar">
          ${tool(["newdoc", "新建", "v"])}${tool(["copy", "复制"])}${tool(["trash", "删除"])}${tool(["layercopy", "层间复制"])}
          <button class="more" aria-label="更多"><svg width="10" height="10" viewBox="3 3 10 10">${shapes.more}</svg></button>
        </div>
        <div class="find"><input placeholder="搜索构件..." aria-label="搜索构件" />${ic("mag")}</div>
        <div class="tree"><div>${arrow}<span>剪力墙</span></div><div><span class="sel">JLQ-1 [外墙]</span></div></div>
      </section>
      <section class="pane propsp">
        <div class="strip"></div>
        <div class="ptabs"><button>属性列表</button><button>图层管理</button></div>
        <div class="pbody">
          <table class="props">
            <colgroup><col style="width:22px" /><col style="width:101px" /><col style="width:145px" /><col style="width:41px" /></colgroup>
            <thead><tr><th></th><th>属性名称</th><th class="hot">属性值</th><th></th></tr></thead>
            <tbody>${PROPS.map((p, i) => this.propRow(p, i))}</tbody>
          </table>
          <div class="bartrack"></div>
        </div>
      </section>
    </div>`;
  }

  private views() {
    return html`<nav class="views" aria-label="视图">
      ${viewIcon(svg`<circle class="d" cx="10" cy="10" r="7.500" stroke-width="1.400"/><path class="b" stroke-width="1.400" d="M3 13C-1 19 5 18 10 14.500 18 9 22 2 17 3.500"/>`)}
      ${viewIcon(svg`${cube("d")}<path class="b" d="M4 10.500h2.500v5H4M4 13h2.500M9 10.500v5c4 0 4-5 0-5z"/>`)}
      ${viewIcon(svg`${cube("d")}<path class="b fl" d="M1 6L5 1H19L15 6z"/>`)}
      ${arrow}
      ${viewIcon(cube("b fl"))}
      ${arrow}
      ${viewIcon(svg`<path class="d" stroke-width="1.400" d="M1 7V1H7M13 1H19V7M19 14V20H13M7 20H1V14"/>`)}
      ${viewIcon(svg`<rect class="d" x="1" y="1" width="18" height="19" stroke-dasharray="3 2"/><path class="b fl" d="M10 5l5 3v6l-5 3-5-3V8zM5 8l5 3 5-3M10 11v6"/>`)}
      <hr />
      ${viewIcon(svg`<path class="d" stroke-width="1.400" d="M9 20H1V1H19V11M4 6h2M8 6h7M4 10h2M8 10h5M4 14h4"/><circle class="b fl" cx="15" cy="16" r="3.500"/><circle class="b" cx="15" cy="16" r="1"/>`)}
    </nav>`;
  }

  render() {
    return html`
      <nav class="tabs">
        <svg class="corner" viewBox="0 0 11 11"><path class="fd" d="M4 7V11H0Z" /></svg>
        ${["开始", "工程设置", "建模", "工程量", "视图", "工具", "云应用", "协同建模(限免)", "IGMS"].map((t) => html`<a href="#" class=${classMap({ on: t === "建模" })}>${t}</a>`)}
        <input placeholder="快捷键搜索, Ctrl+Alt+F" aria-label="快捷键搜索" />
      </nav>
      ${this.ribbon()}
      ${this.options()}
      <main>${this.left()}${this.mid()}<plan-canvas></plan-canvas></main>
      ${this.views()}
      <button class="upload"><i><svg width="20" height="18" viewBox="0 0 20 18"><g class="w" stroke-width="2.500"><circle cx="10" cy="5" r="3.300" /><circle cx="5" cy="12" r="3.500" /><circle cx="15" cy="12" r="3.500" /></g></svg></i><span>拖拽上传</span></button>
      <node-dialog></node-dialog>
      <svg class="marks" aria-hidden="true">
        <ellipse cx="851" cy="432" rx="76" ry="28" />
        <ellipse cx="1190" cy="623" rx="50" ry="51" />
        <ellipse cx="364" cy="902" rx="78" ry="16" />
      </svg>`;
  }
}
